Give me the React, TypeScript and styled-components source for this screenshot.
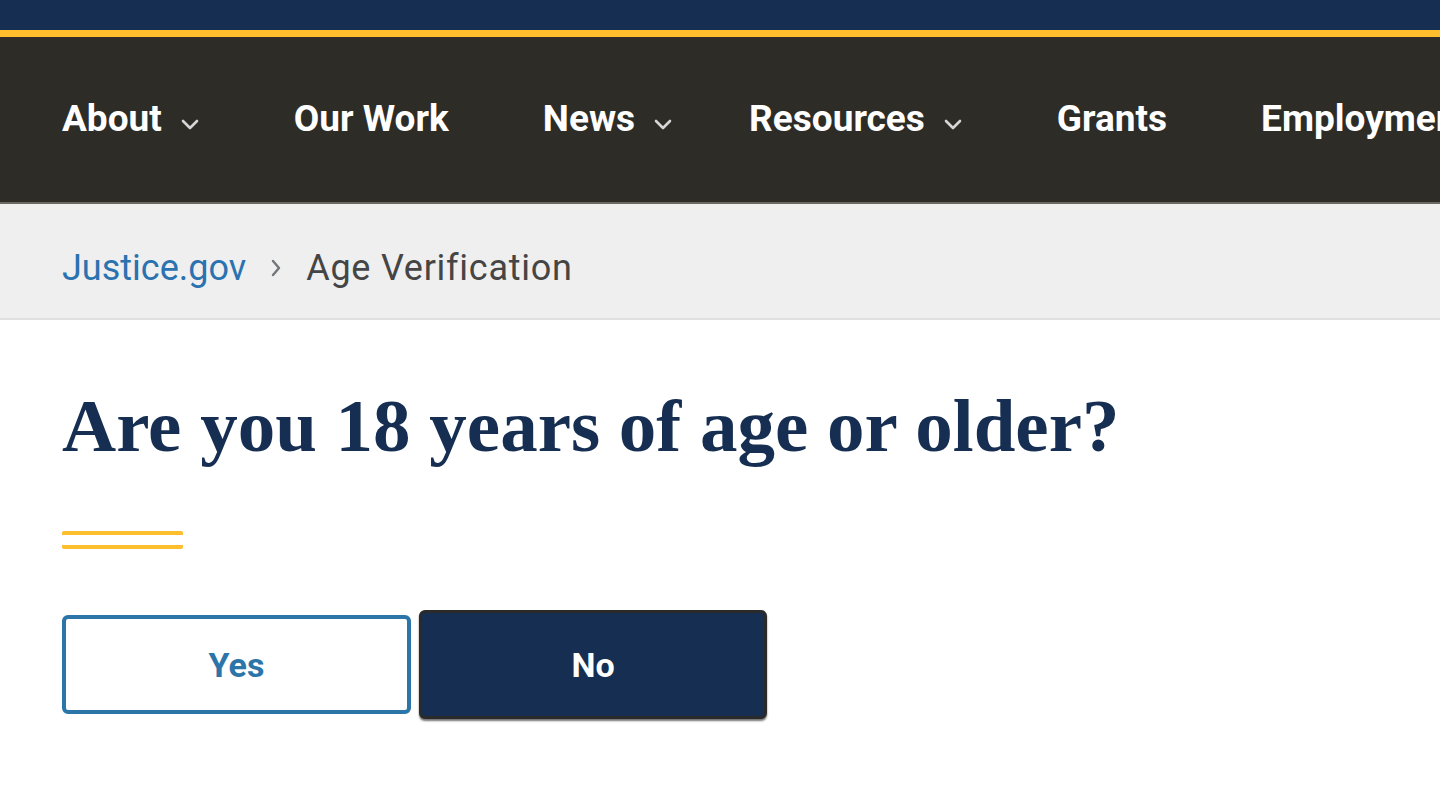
import React from "react";
import styled, { createGlobalStyle } from "styled-components";

const GlobalStyle = createGlobalStyle`
  html, body {
    margin: 0;
    padding: 0;
    background: #ffffff;
    font-family: Roboto, "Liberation Sans", Arial, sans-serif;
  }
  * { box-sizing: border-box; }
`;

const Page = styled.div`
  width: 1440px;
  height: 810px;
  overflow: hidden;
  display: flex;
  flex-direction: column;
`;

const TopBar = styled.div`
  height: 37px;
  flex: 0 0 37px;
  background: #162e51;
  border-bottom: 7px solid #ffbe2e;
`;

const NavBar = styled.nav`
  height: 167px;
  flex: 0 0 167px;
  background: #2d2c27;
  display: flex;
  align-items: center;
  padding-left: 62px;
  padding-bottom: 2px;
  gap: 94px;
  white-space: nowrap;
  overflow: hidden;
  border-bottom: 2px solid #6a6965;
`;

const NavItem = styled.a<{ $pull?: number }>`
  display: flex;
  align-items: center;
  gap: 18px;
  color: #ffffff;
  font-family: Roboto, "Liberation Sans", sans-serif;
  font-weight: 700;
  font-size: 37px;
  text-decoration: none;
  margin-right: ${(p) => (p.$pull ? `-${p.$pull}px` : "0")};
`;

const Chevron = styled.svg`
  width: 20px;
  height: 12px;
  margin-top: 12px;
  flex: 0 0 auto;
`;

const Crumbs = styled.div`
  height: 116px;
  flex: 0 0 116px;
  background: #efefef;
  border-bottom: 2px solid #e0e0e0;
  display: flex;
  align-items: center;
  padding-left: 62px;
  padding-top: 14px;
  gap: 24px;
  font-family: Roboto, "Liberation Sans", sans-serif;
  font-size: 36px;
`;

const CrumbLink = styled.a`
  color: #2b72b0;
  text-decoration: none;
`;

const CrumbSep = styled.svg`
  width: 12px;
  height: 20px;
  flex: 0 0 auto;
`;

const CrumbCurrent = styled.span`
  color: #454545;
  letter-spacing: 0.75px;
`;

const Main = styled.main`
  padding: 0 62px;
  display: flex;
  flex-direction: column;
  align-items: flex-start;
`;

const Heading = styled.h1`
  margin: 62px 0 0 0;
  font-family: "Liberation Serif", "Times New Roman", serif;
  font-weight: 700;
  font-size: 75px;
  line-height: 88px;
  color: #162e51;
  letter-spacing: 0;
`;

const Rule = styled.div`
  margin-top: 61px;
  width: 121px;
  height: 18px;
  border-top: 4px solid #ffbe2e;
  border-bottom: 4px solid #ffbe2e;
  border-radius: 2px;
`;

const Buttons = styled.div`
  margin-top: 61px;
  display: flex;
  align-items: center;
  gap: 8px;
`;

const Button = styled.button<{ $primary?: boolean }>`
  font-family: Roboto, "Liberation Sans", sans-serif;
  font-weight: 700;
  font-size: 34px;
  border-radius: 6px;
  cursor: pointer;
  width: ${(p) => (p.$primary ? "348px" : "349px")};
  height: ${(p) => (p.$primary ? "109px" : "99px")};
  background: ${(p) => (p.$primary ? "#162e51" : "#ffffff")};
  color: ${(p) => (p.$primary ? "#ffffff" : "#2b75a8")};
  border: ${(p) => (p.$primary ? "3px solid #2a2a2a" : "4px solid #2b75a8")};
  box-shadow: ${(p) => (p.$primary ? "0 2px 2px rgba(0,0,0,0.55)" : "none")};
`;

const ChevronDown = () => (
  <Chevron viewBox="0 0 20 12" fill="none">
    <polyline points="3,2 10,9 17,2" stroke="#d6d6d6" strokeWidth="2.6" strokeLinecap="round" strokeLinejoin="round" />
  </Chevron>
);

export default function App() {
  return (
    <Page>
      <GlobalStyle />
      <TopBar />
      <NavBar>
        <NavItem href="#">About<ChevronDown /></NavItem>
        <NavItem href="#">Our Work</NavItem>
        <NavItem href="#" $pull={18}>News<ChevronDown /></NavItem>
        <NavItem href="#">Resources<ChevronDown /></NavItem>
        <NavItem href="#">Grants</NavItem>
        <NavItem href="#">Employment</NavItem>
      </NavBar>
      <Crumbs>
        <CrumbLink href="#">Justice.gov</CrumbLink>
        <CrumbSep viewBox="0 0 12 20" fill="none">
          <polyline points="3,3 9,10 3,17" stroke="#71767a" strokeWidth="2.4" strokeLinecap="round" strokeLinejoin="round" />
        </CrumbSep>
        <CrumbCurrent>Age Verification</CrumbCurrent>
      </Crumbs>
      <Main>
        <Heading>Are you 18 years of age or older?</Heading>
        <Rule />
        <Buttons>
          <Button>Yes</Button>
          <Button $primary>No</Button>
        </Buttons>
      </Main>
    </Page>
  );
}
